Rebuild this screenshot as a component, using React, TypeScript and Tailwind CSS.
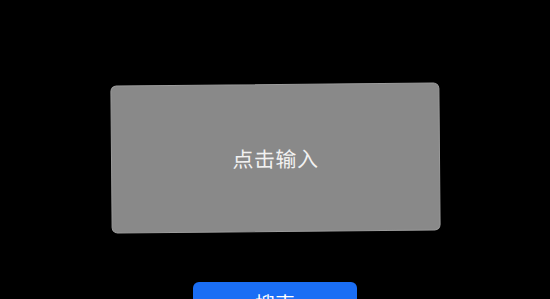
export default function App() {
  return (
    <div
      className="w-[550px] h-[299px] bg-black overflow-hidden flex flex-col items-center"
      style={{ fontFamily: '"Noto Sans CJK SC", "Noto Sans", sans-serif' }}
    >
      {/* Input card */}
      <div className="mt-[84px] w-[329px] h-[148px] shrink-0 rounded-[6px] bg-[#898989] border border-[#9b9b9b] flex items-center justify-center rotate-[-0.5deg]">
        <span className="text-[21px] leading-none text-[#f2f2f2] tracking-[0.5px]">点击输入</span>
      </div>

      {/* Action button */}
      <button className="mt-[50px] w-[164px] h-[44px] shrink-0 rounded-[6px] bg-[#1a6ef5] text-white text-[20px] flex items-center justify-center">
        搜索
      </button>
    </div>
  );
}
